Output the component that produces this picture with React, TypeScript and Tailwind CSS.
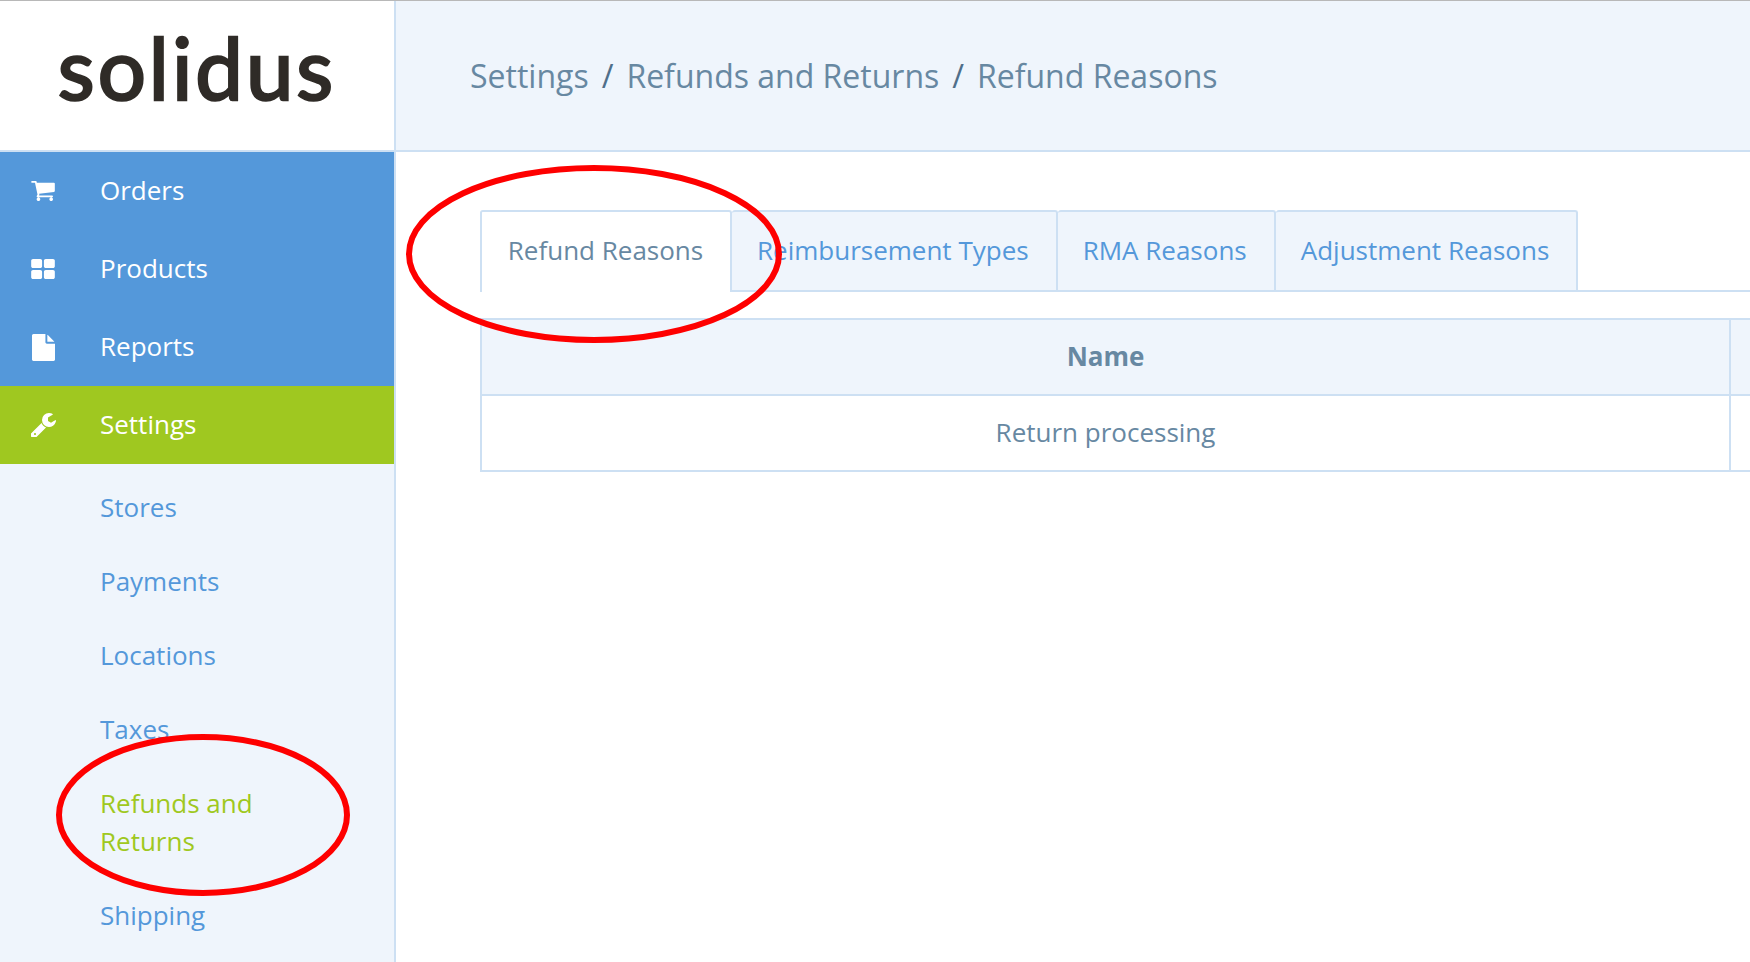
import React from 'react';

const sans = { fontFamily: '"Open Sans", sans-serif' };

function CartIcon() {
  return (
    <svg viewBox="0 256 1664 1408" className="h-[20px] w-[24px] fill-white">
      <path d="M640 1536q0 52-38 90t-90 38-90-38-38-90 38-90 90-38 90 38 38 90zm896 0q0 52-38 90t-90 38-90-38-38-90 38-90 90-38 90 38 38 90zm128-1088v512q0 24-16.5 42.5t-40.5 21.5l-1044 122q13 60 13 70 0 16-24 64h920q26 0 45 19t19 45-19 45-45 19h-1024q-26 0-45-19t-19-45q0-11 8-31.5t16-36 21.5-40 15.5-29.5l-177-823h-204q-26 0-45-19t-19-45 19-45 45-19h256q16 0 28.5 6.5t19.5 15.5 13 24.5 8 26 5.5 29.5 4.5 26h1201q26 0 45 19t19 45z" />
    </svg>
  );
}

function GridIcon() {
  return (
    <svg viewBox="64 128 1664 1408" className="h-[20px] w-[24px] fill-white">
      <path d="M832 1024v384q0 52-38 90t-90 38h-512q-52 0-90-38t-38-90v-384q0-52 38-90t90-38h512q52 0 90 38t38 90zm0-768v384q0 52-38 90t-90 38h-512q-52 0-90-38t-38-90v-384q0-52 38-90t90-38h512q52 0 90 38t38 90zm896 768v384q0 52-38 90t-90 38h-512q-52 0-90-38t-38-90v-384q0-52 38-90t90-38h512q52 0 90 38t38 90zm0-768v384q0 52-38 90t-90 38h-512q-52 0-90-38t-38-90v-384q0-52 38-90t90-38h512q52 0 90 38t38 90z" />
    </svg>
  );
}

function FileIcon() {
  return (
    <svg viewBox="128 0 1536 1792" className="ml-px h-[27px] w-[23px] fill-white">
      <path d="M1152 512v-472q22 14 36 28l408 408q14 14 28 36h-472zm-128 32q0 40 28 68t68 28h544v1056q0 40-28 68t-68 28h-1344q-40 0-68-28t-28-68v-1600q0-40 28-68t68-28h800v544z" />
    </svg>
  );
}

function WrenchIcon() {
  return (
    <svg viewBox="64 128 1600 1536" className="h-[24px] w-[25px] fill-white">
      <path d="M384 1472q0-26-19-45t-45-19-45 19-19 45 19 45 45 19 45-19 19-45zm644-420l-682 682q-37 37-90 37-52 0-91-37l-106-108q-38-36-38-90 0-53 38-91l681-681q39 98 114.5 173.5t173.5 114.5zm634-435q0 39-23 106-47 134-164.5 217.5t-258.5 83.5q-185 0-316.5-131.5t-131.5-316.5 131.5-316.5 316.5-131.5q58 0 121.5 16.5t107.5 46.5q16 11 16 28t-16 28l-293 169v224l193 107q5-3 79-48.5t135.5-81 70.5-35.5q15 0 23.5 10t8.5 25z" />
    </svg>
  );
}

const mainNav = [
  { label: 'Orders', icon: <CartIcon /> },
  { label: 'Products', icon: <GridIcon /> },
  { label: 'Reports', icon: <FileIcon /> }
];

const subNav = ['Stores', 'Payments', 'Locations', 'Taxes', 'Refunds and Returns', 'Shipping'];
const tabs = ['Reimbursement Types', 'RMA Reasons', 'Adjustment Reasons'];

function NavRow({ label, icon, active }: { label: string; icon: React.ReactNode; active?: boolean }) {
  return (
    <li
      className={`flex h-[78px] items-center text-[26px] font-medium text-white ${
        active ? 'bg-[#9fc820]' : 'bg-[#5498da]'
      }`}
    >
      <span className="flex w-[100px] justify-start pl-[31px]">{icon}</span>
      <span className="pb-[2px]">{label}</span>
    </li>
  );
}

function App() {
  return (
    <div className="relative h-[962px] w-[1750px] overflow-hidden bg-white" style={sans}>
      <div className="h-px bg-[#b8b8b8]" />
      <div className="flex h-[961px]">
        <aside className="w-[396px] shrink-0 border-r-2 border-[#cde0f3] bg-[#eff5fc]">
          <div className="flex h-[151px] items-center justify-center border-b-2 border-[#cde0f3] bg-white">
            <span
              className="pb-[16px] text-[85px] leading-none font-normal tracking-[3px] text-[#2f2b27] [-webkit-text-stroke:2.5px_#2f2b27]"
              style={{ fontFamily: 'Lato, sans-serif' }}
            >
              solidus
            </span>
          </div>
          <ul>
            {mainNav.map((item) => (
              <NavRow key={item.label} label={item.label} icon={item.icon} />
            ))}
            <NavRow label="Settings" icon={<WrenchIcon />} active />
          </ul>
          <ul className="pt-[6px] pl-[100px] pr-[90px] text-[26px] leading-[38px] text-[#5498da]">
            {subNav.map((item) => (
              <li key={item} className={`py-[18px] ${item.startsWith('Refunds') ? 'text-[#9fc820]' : ''}`}>
                {item}
              </li>
            ))}
          </ul>
        </aside>

        <main className="min-w-0 flex-1">
          <header className="flex h-[151px] items-center gap-[13px] border-b-2 border-[#cde0f3] bg-[#eff5fc] pl-[74px] text-[32px] text-[#6788a2]">
            <span>Settings</span>
            <span className="text-[#4f6f8a]">/</span>
            <span>Refunds and Returns</span>
            <span className="text-[#4f6f8a]">/</span>
            <span>Refund Reasons</span>
          </header>

          <div className="pt-[58px]">
            <nav className="ml-[84px] flex h-[82px] border-b-2 border-[#cde0f3] text-[26px]">
              <div className="z-10 mb-[-2px] flex h-[82px] w-[252px] items-center justify-center rounded-t-[3px] border-x-2 border-t-2 border-[#cde0f3] bg-white pr-[1px] pb-[4px] text-[#6788a2]">
                Refund Reasons
              </div>
              {tabs.map((tab) => (
                <div
                  key={tab}
                  className="flex h-[80px] items-center rounded-t-[3px] border-t-2 border-r-2 border-[#cde0f3] bg-[#eff5fc] pr-[27px] pb-[2px] pl-[25px] text-[#5498da]"
                >
                  {tab}
                </div>
              ))}
            </nav>

            <div className="pt-[26px] pl-[84px]">
              <table className="w-[1400px] table-fixed border-collapse text-[26px] text-[#6788a2]">
                <thead>
                  <tr className="h-[76px] bg-[#eff5fc]">
                    <th className="w-[1249px] border-2 border-[#cde0f3] pb-[2px] font-bold">Name</th>
                    <th className="border-2 border-[#cde0f3]" />
                  </tr>
                </thead>
                <tbody>
                  <tr className="h-[76px]">
                    <td className="border-2 border-[#cde0f3] pb-[2px] text-center">Return processing</td>
                    <td className="border-2 border-[#cde0f3]" />
                  </tr>
                </tbody>
              </table>
            </div>
          </div>
        </main>
      </div>

      <svg className="pointer-events-none absolute top-0 left-0 z-20 h-[962px] w-[1750px] fill-none stroke-[#fe0000] stroke-[6px]">
        <ellipse cx="594" cy="254" rx="185" ry="86" />
        <ellipse cx="203" cy="815" rx="144" ry="78" />
      </svg>
    </div>
  );
}

export default App;
